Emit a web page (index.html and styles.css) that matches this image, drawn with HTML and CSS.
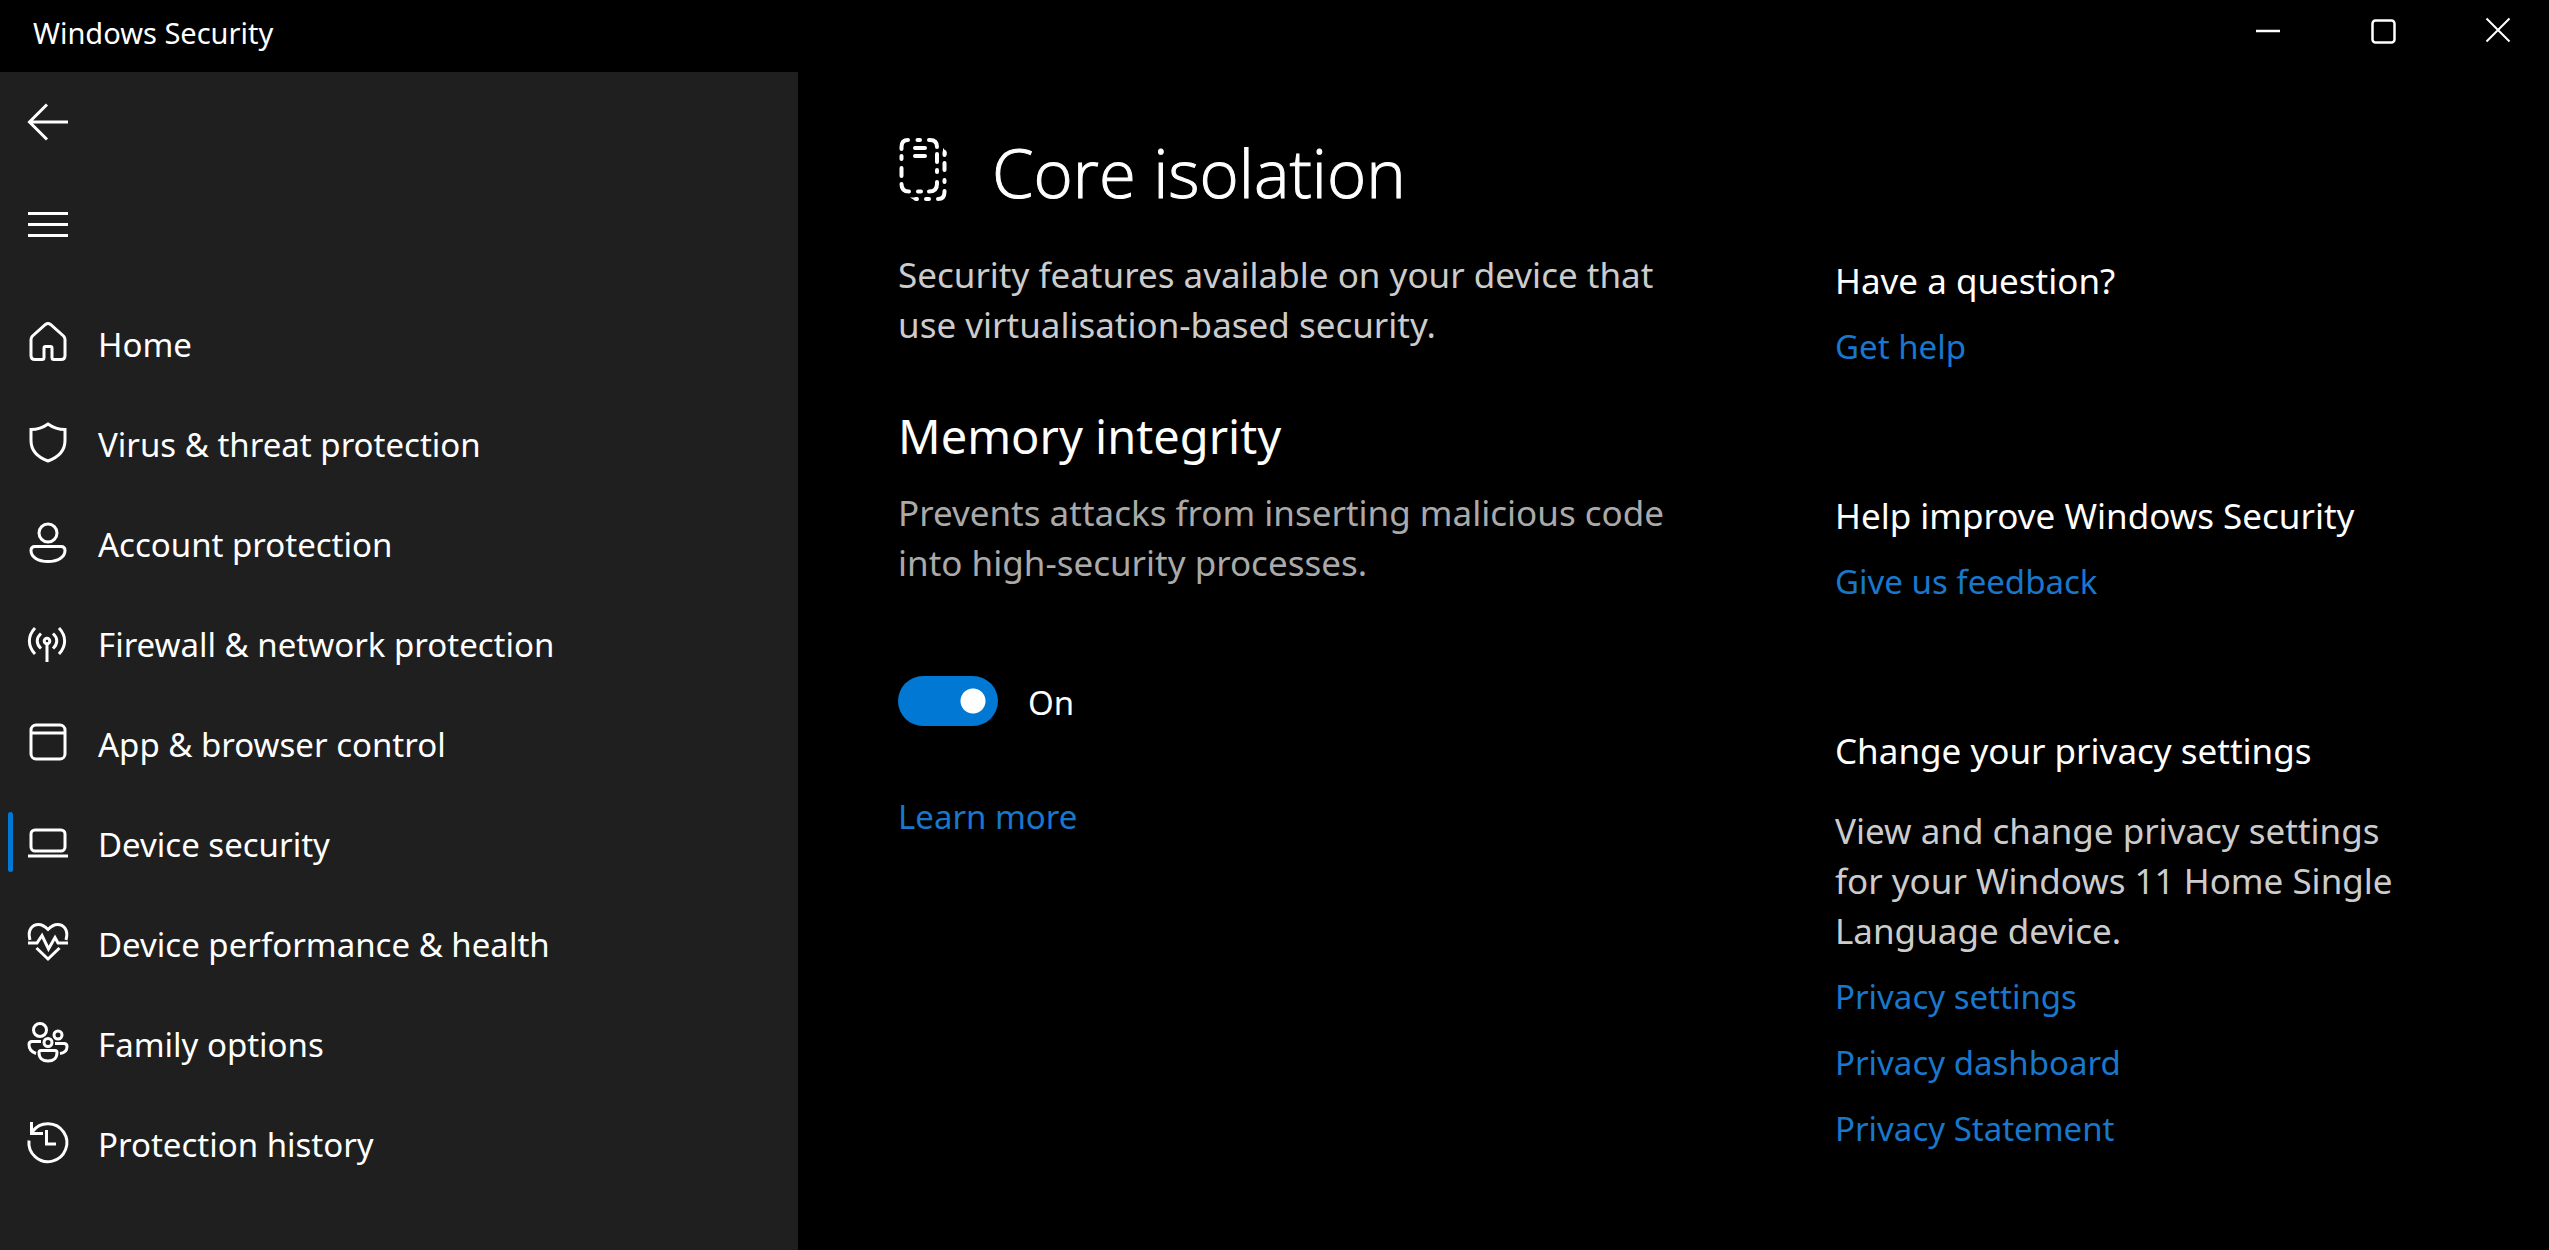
FILE: index.html
```html
<!DOCTYPE html>
<html lang="en-GB">
<head>
  <meta charset="UTF-8" />
  <meta name="viewport" content="width=device-width, initial-scale=1.0" />
  <title>Windows Security</title>
  <link rel="stylesheet" href="styles.css">
</head>
<body>

  <header class="titlebar">
    <span class="titlebar-name">Windows Security</span>
    <div class="window-buttons">
      <button type="button" aria-label="Minimise">
        <svg viewBox="0 0 26 26"><path d="M1 13h24" stroke-width="2.5"/></svg>
      </button>
      <button type="button" aria-label="Maximise">
        <svg viewBox="0 0 26 26"><rect x="2.5" y="2.5" width="22" height="22" rx="3" stroke-width="2.5"/></svg>
      </button>
      <button type="button" aria-label="Close">
        <svg viewBox="0 0 26 26"><path d="M1.5 .5l23 23M24.5 .5l-23 23" stroke-width="2"/></svg>
      </button>
    </div>
  </header>

  <div class="layout">
    <aside class="sidebar">
      <button type="button" class="icon-button" aria-label="Back">
        <svg viewBox="0 0 40 40"><path d="M40 19H2M19 1.5L1.5 19L19 36.5"/></svg>
      </button>
      <button type="button" class="icon-button" aria-label="Open navigation">
        <svg viewBox="0 0 40 40"><path d="M0 9.5h40M0 20.5h40M0 31.5h40"/></svg>
      </button>

      <nav class="nav">
        <a href="#home" class="nav-item">
          <svg viewBox="0 0 40 40"><path d="M17.5 2.5q2.5-2 5 0L35.5 14Q37 15.5 37 17.5V33.5Q37 37.5 33 37.5H26Q24 37.5 24 35.5V26Q24 24.5 22.5 24.5H17.5Q16 24.5 16 26V35.5Q16 37.5 14 37.5H7Q3 37.5 3 33.5V17.5Q3 15.5 4.5 14Z"/></svg>
          Home
        </a>
        <a href="#virus" class="nav-item">
          <svg viewBox="0 0 40 40"><path d="M20 2Q27.5 7.5 37 7.5V18.5C37 28 31 35 20 39C9 35 3 28 3 18.5V7.5Q12.5 7.5 20 2Z"/></svg>
          Virus &amp; threat protection
        </a>
        <a href="#account" class="nav-item">
          <svg viewBox="0 0 40 40"><circle cx="20" cy="11" r="9"/><path d="M7 24.5H33Q37 24.5 37 28.5C37 35 30 39.5 20 39.5S3 35 3 28.5Q3 24.5 7 24.5Z"/></svg>
          Account protection
        </a>
        <a href="#firewall" class="nav-item">
          <svg viewBox="0 0 40 40"><circle cx="19" cy="19" r="2.8"/><path d="M19 22V40M7 6C-.5 14 -.5 24 7 32M31 6C38.5 14 38.5 24 31 32M13 11.5C8 16 8 22 13 26.5M25 11.5C30 16 30 22 25 26.5"/></svg>
          Firewall &amp; network protection
        </a>
        <a href="#browser" class="nav-item">
          <svg viewBox="0 0 40 40"><rect x="3" y="3" width="34" height="34" rx="5"/><path d="M3 11h34"/></svg>
          App &amp; browser control
        </a>
        <a href="#device" class="nav-item selected" aria-current="page">
          <svg viewBox="0 0 40 40"><rect x="3" y="8" width="34" height="21" rx="4"/><path d="M0 34h40"/></svg>
          Device security
        </a>
        <a href="#health" class="nav-item">
          <svg viewBox="0 0 40 40"><path d="M2 18C-1 7 5 2.5 10.5 2.5Q15 2.5 20 7.5Q25 2.5 29.5 2.5C35 2.5 41 7 38 18M0 21H9L14 13.5L20.5 27L27 15.5L30 21H40M8.5 26L20 37L31.5 26"/></svg>
          Device performance &amp; health
        </a>
        <a href="#family" class="nav-item">
          <svg viewBox="0 0 40 40"><circle cx="12" cy="8" r="6.5"/><circle cx="30" cy="13" r="4"/><circle cx="20" cy="20.5" r="4"/><path d="M13 19.5H4Q1 19.5 1 22.5C1 27 3.5 30 8 31.5M27 21.5H36Q39 21.5 39 24.5C39 28.5 36.5 31 32 31.5M13 28.5H27Q29 28.5 29 30.5C29 36 25.5 39 20 39S11 36 11 30.5Q11 28.5 13 28.5Z"/></svg>
          Family options
        </a>
        <a href="#history" class="nav-item">
          <svg viewBox="0 0 40 40"><path d="M1 18.5A19 19 0 1 0 4.5 9.5M3.5 0V11.5H15M18.5 8V22H28"/></svg>
          Protection history
        </a>
      </nav>
    </aside>

    <main class="content">
      <section class="core">
        <div class="page-title">
          <svg viewBox="0 0 52 64">
            <path d="M10 3Q3.5 3 3.5 10V12M19.5 3H22M31 3H32Q39 3 39 10M3.5 19V22M3.5 31V39M3.5 47Q3.5 54.5 11 54.5M20 54.5H23M31 54.5Q39 54.5 39 47V45M39 17V25M39 33V35M17 11H27M17 19H27"/>
            <path d="M46.5 15V18M46.5 26V33M46.5 43V45M46.5 54V55Q46.5 62 40 62M28 62H31M18 62H19"/>
            <path d="M45 11L48.5 15V18H45ZM12 60.5L17 63.5H20V60.5Z" fill="currentColor" stroke="none"/>
          </svg>
          <h1>Core isolation</h1>
        </div>
        <p class="intro">Security features available on your device that use virtualisation-based security.</p>

        <h2>Memory integrity</h2>
        <p class="description">Prevents attacks from inserting malicious code into high-security processes.</p>

        <label class="toggle">
          <input type="checkbox" role="switch" aria-label="Memory integrity" checked>
          <span>On</span>
        </label>

        <a href="#learn" class="link">Learn more</a>
      </section>

      <aside class="help">
        <section>
          <h3>Have a question?</h3>
          <a href="#help" class="link">Get help</a>
        </section>
        <section>
          <h3>Help improve Windows Security</h3>
          <a href="#feedback" class="link">Give us feedback</a>
        </section>
        <section>
          <h3>Change your privacy settings</h3>
          <p>View and change privacy settings for your Windows 11 Home Single Language device.</p>
          <a href="#privacy" class="link">Privacy settings</a>
          <a href="#dashboard" class="link">Privacy dashboard</a>
          <a href="#statement" class="link">Privacy Statement</a>
        </section>
      </aside>
    </main>
  </div>

</body>
</html>
```

FILE: styles.css
```css
* {
  box-sizing: border-box;
}

body {
  margin: 0;
  min-height: 100vh;
  display: flex;
  flex-direction: column;
  font-family: "Segoe UI", "Noto Sans", "Open Sans", sans-serif;
  font-size: 33px;
  line-height: 50px;
  background-color: #000;
  color: #fff;
}

h1, h2, h3, p {
  margin: 0;
  font-weight: 400;
}

h3, p {
  font-size: 35px;
}

button {
  padding: 0;
  border: none;
  background: none;
  color: inherit;
  cursor: pointer;
}

a {
  text-decoration: none;
}

svg {
  display: block;
  flex: none;
  fill: none;
  stroke: currentColor;
  stroke-width: 3;
  overflow: visible;
}

/* Title bar */
.titlebar {
  display: flex;
  justify-content: space-between;
  height: 72px;
  padding-left: 33px;
}

.titlebar-name {
  font-size: 29px;
  line-height: 66px;
}

.window-buttons {
  display: flex;
  gap: 13px;
}

.window-buttons button {
  display: flex;
  justify-content: center;
  width: 102px;
  padding-top: 18px;
}

.window-buttons svg {
  width: 26px;
  height: 26px;
}

.layout {
  flex: 1;
  display: flex;
}

/* Sidebar */
.sidebar {
  width: 798px;
  flex: none;
  background-color: #1f1f1f;
}

.icon-button {
  display: flex;
  align-items: center;
  width: 100px;
  height: 101px;
  padding-left: 28px;
}

.icon-button svg,
.nav-item svg {
  width: 40px;
  height: 40px;
}

.nav {
  display: flex;
  flex-direction: column;
  padding-top: 21px;
}

.nav-item {
  position: relative;
  display: flex;
  align-items: center;
  gap: 30px;
  height: 100px;
  padding-left: 28px;
  color: #fff;
}

.nav-item svg {
  margin-bottom: 6px;
}

.nav-item.selected::before {
  content: '';
  position: absolute;
  left: 8px;
  top: 17px;
  width: 5px;
  height: 60px;
  border-radius: 3px;
  background-color: #0078d4;
}

/* Content */
.content {
  flex: 1;
  display: flex;
  padding-left: 100px;
  padding-right: 132px;
}

.core {
  flex: 1;
  padding-top: 58px;
}

.core p {
  max-width: 790px;
}

.page-title {
  display: flex;
  align-items: center;
  gap: 42px;
}

.page-title svg {
  width: 52px;
  height: 64px;
  margin-bottom: 6px;
  stroke-width: 4;
  stroke-linecap: round;
  stroke-linejoin: round;
}

/* thin stroke brings the light face up to semilight */
h1 {
  font-family: "Segoe UI", "Open Sans", sans-serif;
  font-size: 67px;
  line-height: 84px;
  font-weight: 300;
  -webkit-text-stroke: 1px #fff;
}

.intro {
  padding-top: 36px;
  color: #ccc;
}

h2 {
  padding-top: 54px;
  font-size: 47px;
  line-height: 64px;
}

.description {
  padding-top: 20px;
  color: #aaa;
}

.toggle {
  display: flex;
  align-items: center;
  gap: 30px;
  width: max-content;
  padding-top: 86px;
}

.toggle input {
  appearance: none;
  width: 100px;
  height: 50px;
  margin: 0;
  border-radius: 25px;
  background: radial-gradient(circle at 75px 25px, #fff 12px, #0078d4 13px);
}

.toggle span {
  padding-top: 4px;
}

.link {
  display: block;
  width: max-content;
  color: #1977cc;
}

.core .link {
  padding-top: 64px;
}

.help {
  display: flex;
  flex-direction: column;
  gap: 119px;
  width: 582px;
  padding-top: 184px;
}

.help p {
  padding-top: 30px;
  color: #ccc;
}

.help .link {
  padding-top: 16px;
}
```
